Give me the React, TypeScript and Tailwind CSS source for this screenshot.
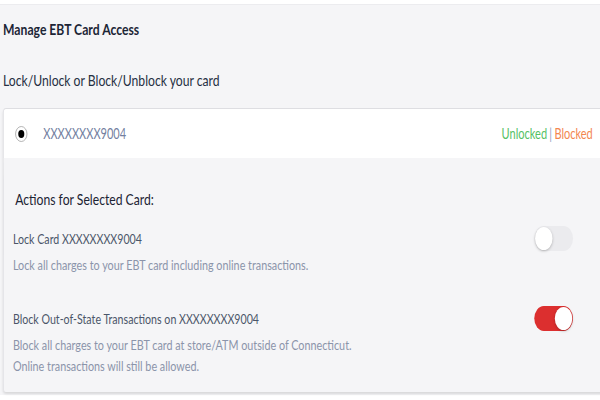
import { useState } from "react";

function Toggle({ on, onChange }: { on: boolean; onChange: () => void }) {
  return (
    <button
      onClick={onChange}
      className={`flex h-[25px] w-[51px] shrink-0 items-center rounded-full px-[1px] transition-colors ${
        on ? "justify-end bg-[#dc2f2f]" : "justify-start bg-[#ebebee]"
      }`}
      aria-pressed={on}
    >
      <span className="h-[23px] w-[23px] rounded-full bg-white shadow-[0_1px_3px_rgba(0,0,0,0.25)]" />
    </button>
  );
}

export default function App() {
  const [locked, setLocked] = useState(false);
  const [blocked, setBlocked] = useState(true);

  return (
    <div className="h-[400px] w-full overflow-hidden bg-white font-[Lato,sans-serif]">
      {/* the source page is wider than the shot: keep its 790px layout, squeeze it to 600 */}
      <div className="w-[790px] origin-top-left scale-x-[0.76] pt-[4px]">
        <div className="h-[391px] border-t border-[#ececef] bg-[#f5f5f7] pt-[12px]">
          <h1 className="pl-[4px] text-[16px] font-bold leading-[24px] text-[#1c2536]">
            Manage EBT Card Access
          </h1>
          <h2 className="mt-[27px] pl-[4px] text-[16px] leading-[24px] text-[#263043]">
            Lock/Unlock or Block/Unblock your card
          </h2>

          <div className="ml-[4px] mt-[16px] w-[800px] rounded-[4px] shadow-[0_2px_3px_rgba(0,0,0,0.12)]">
            {/* selected card row */}
            <div className="flex h-[50px] items-center rounded-t-[4px] border border-b-0 border-[#dedee2] bg-white pl-[15px] pr-[23px]">
              <span className="flex h-[16px] w-[16px] items-center justify-center rounded-full border border-[#a8a8a8] bg-white">
                <span className="h-[8px] w-[8px] rounded-full bg-black" />
              </span>
              <span className="ml-[21px] text-[14.5px] text-[#737f9f]">XXXXXXXX9004</span>
              <span className="ml-auto text-[14.5px]">
                <span className="text-[#55c165]">Unlocked</span>
                <span className="mx-[3px] text-[#8ea2c2]">|</span>
                <span className="text-[#f3874f]">Blocked</span>
              </span>
            </div>

            {/* actions */}
            <div className="rounded-b-[4px] border-l border-[#dedee2] bg-[#f5f5f7] pb-[16px] pl-[12px] pr-[50px] pt-[29px]">
              <h3 className="ml-[3px] text-[16px] leading-[24px] text-[#1c2333]">
                Actions for Selected Card:
              </h3>

              <div className="mt-[18px] flex items-start justify-between">
                <div>
                  <div className="text-[14px] leading-[20px] text-[#4b5569]">Lock Card XXXXXXXX9004</div>
                  <p className="mt-[5px] text-[14.2px] leading-[21px] text-[#8b94aa]">
                    Lock all charges to your EBT card including online transactions.
                  </p>
                </div>
                <div className="mt-[-3px]">
                  <Toggle on={locked} onChange={() => setLocked((v) => !v)} />
                </div>
              </div>

              <div className="mt-[34px] flex items-start justify-between">
                <div>
                  <div className="text-[14px] leading-[20px] text-[#4b5569]">
                    Block Out-of-State Transactions on XXXXXXXX9004
                  </div>
                  <p className="mt-[5px] text-[14.2px] leading-[21px] text-[#8b94aa]">
                    Block all charges to your EBT card at store/ATM outside of Connecticut.
                    <br />
                    Online transactions will still be allowed.
                  </p>
                </div>
                <div className="mt-[-3px]">
                  <Toggle on={blocked} onChange={() => setBlocked((v) => !v)} />
                </div>
              </div>
            </div>
          </div>
        </div>
      </div>
    </div>
  );
}
